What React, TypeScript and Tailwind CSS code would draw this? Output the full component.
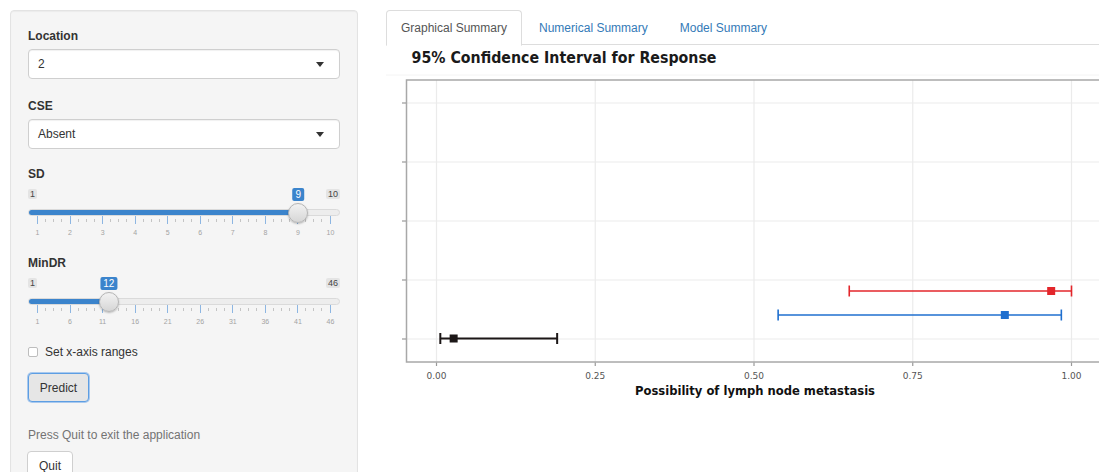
import React from "react";

type SliderProps = {
  min: number;
  max: number;
  value: number;
  ticks: number[];
};

// ion.rangeSlider-style single slider with a labelled grid underneath
function RangeSlider({ min, max, value, ticks }: SliderProps) {
  const gridLeft = 9;
  const gridWidth = 294;
  const handleX = gridLeft + ((value - min) / (max - min)) * gridWidth;
  const marks: boolean[] = [];
  ticks.forEach((_, i) => {
    marks.push(true);
    if (i < ticks.length - 1) marks.push(false, false, false);
  });

  return (
    <div className="relative mb-[17px] flex w-full flex-col">
      <div className="flex h-[16px] items-end justify-between text-[9px] leading-[10px] text-[#444]">
        <span className="h-[10px] rounded-[2px] bg-[#e4e4e4] px-[2px]">{min}</span>
        <span className="h-[10px] rounded-[2px] bg-[#e4e4e4] px-[2px]">{max}</span>
      </div>

      <div className="mt-[10px] h-[7px] overflow-hidden rounded-full border border-[#dadada] bg-[#ededed]">
        <div className="-m-px h-[7px] bg-[#3b84cc]" style={{ width: handleX }} />
      </div>

      <div className="flex h-[8px] items-start justify-between px-[9px]">
        {marks.map((major, i) =>
          major ? (
            <span key={i} className="h-[8px] w-px bg-[#8db6e2]" />
          ) : (
            <span key={i} className="mt-[3px] h-[3px] w-px bg-[#c4c4c4]" />
          )
        )}
      </div>

      <div className="mt-[5px] flex justify-between px-[9px] text-[7px] leading-[8px] text-[#a3a3a3]">
        {ticks.map((t) => (
          <span key={t} className="flex w-px justify-center">
            {t}
          </span>
        ))}
      </div>

      <span
        className="absolute top-[5px] h-[13px] -translate-x-1/2 rounded-[2px] bg-[#3b84cc] px-[3px] text-[10px] leading-[13px] text-white"
        style={{ left: handleX }}
      >
        {value}
      </span>
      <div
        className="absolute top-[20px] h-[20px] w-[20px] -translate-x-1/2 rounded-full border border-[#b5b5b5] bg-gradient-to-b from-[#f2f2f2] to-[#d6d6d6] shadow-[0_1px_2px_rgba(0,0,0,0.25)]"
        style={{ left: handleX }}
      />
    </div>
  );
}

function SelectBox({ value }: { value: string }) {
  return (
    <div className="flex h-[30px] items-center justify-between rounded-[4px] border border-[#cfcfcf] bg-white pl-[9px] pr-[15px] text-[12px] text-[#333] shadow-[inset_0_1px_1px_rgba(0,0,0,0.06)]">
      {value}
      <span className="h-0 w-0 border-x-[4px] border-t-[5px] border-x-transparent border-t-[#333]" />
    </div>
  );
}

function Label({ children }: { children: React.ReactNode }) {
  return <div className="h-[18px] text-[12px] font-bold leading-[18px] text-[#333]">{children}</div>;
}

const xTicks = [0, 0.25, 0.5, 0.75, 1];
const xScale = (v: number) => 436.5 + v * 635;
const yGrid = [104, 163, 222, 281, 340];

const intervals = [
  { y: 292, lo: 0.65, hi: 1.0, est: 0.968, color: "#e3262b", w: 1.6 },
  { y: 316, lo: 0.538, hi: 0.984, est: 0.895, color: "#1f6fcf", w: 1.6 },
  { y: 339.5, lo: 0.006, hi: 0.19, est: 0.027, color: "#1c1717", w: 2 },
];

function ConfidencePlot() {
  return (
    <svg
      width={713}
      height={426}
      viewBox="386 46 713 426"
      className="block"
      fontFamily="'DejaVu Sans', sans-serif"
    >
      <line x1={386} x2={1099} y1={76} y2={76} stroke="#f4f4f4" />
      <text
        x={411.5}
        y={64.3}
        fontSize={15}
        fontWeight={700}
        fill="#1a1a1a"
        textLength={305}
        lengthAdjust="spacingAndGlyphs"
      >
        95% Confidence Interval for Response
      </text>

      {xTicks.map((t) => (
        <line key={`gx${t}`} x1={xScale(t)} x2={xScale(t)} y1={81} y2={363} stroke="#ebebeb" strokeWidth={1.2} />
      ))}
      {yGrid.map((y) => (
        <line key={`gy${y}`} x1={406} x2={1099} y1={y} y2={y} stroke="#ebebeb" strokeWidth={1.2} />
      ))}
      <rect x={406.5} y={81} width={720} height={282} fill="none" stroke="#a8a8a8" strokeWidth={1.5} />

      {yGrid.map((y) => (
        <line key={`ty${y}`} x1={402} x2={406} y1={y} y2={y} stroke="#999" strokeWidth={1.2} />
      ))}
      {xTicks.map((t) => (
        <line key={`tx${t}`} x1={xScale(t)} x2={xScale(t)} y1={363.5} y2={367} stroke="#999" strokeWidth={1.2} />
      ))}

      {intervals.map((r) => (
        <g key={r.color} stroke={r.color} strokeWidth={r.w}>
          <line x1={xScale(r.lo)} x2={xScale(r.hi)} y1={r.y} y2={r.y} />
          <line x1={xScale(r.lo)} x2={xScale(r.lo)} y1={r.y - 5.5} y2={r.y + 5.5} />
          <line x1={xScale(r.hi)} x2={xScale(r.hi)} y1={r.y - 5.5} y2={r.y + 5.5} />
          <rect x={xScale(r.est) - 4} y={r.y - 4} width={8} height={8} fill={r.color} stroke="none" />
        </g>
      ))}

      {xTicks.map((t) => (
        <text key={`lx${t}`} x={xScale(t)} y={379.5} fontSize={9} fill="#555" textAnchor="middle">
          {t.toFixed(2)}
        </text>
      ))}
      <text
        x={635}
        y={395.5}
        fontSize={12}
        fontWeight={700}
        fill="#111"
        textLength={240}
        lengthAdjust="spacingAndGlyphs"
      >
        Possibility of lymph node metastasis
      </text>
    </svg>
  );
}

export default function App() {
  return (
    <div className="flex h-[472px] w-[1099px] overflow-hidden bg-white font-['Liberation_Sans',Arial,sans-serif] text-[#333]">
      <aside className="ml-[10px] mt-[10px] flex h-[520px] w-[348px] shrink-0 flex-col items-start rounded-[4px] border border-[#e3e3e3] bg-[#f5f5f5] px-[17px] pt-[16px] shadow-[inset_0_1px_1px_rgba(0,0,0,0.04)] [&>*]:self-stretch">
        <Label>Location</Label>
        <div className="mb-[18px] mt-[4px]">
          <SelectBox value="2" />
        </div>

        <Label>CSE</Label>
        <div className="mb-[16px] mt-[4px]">
          <SelectBox value="Absent" />
        </div>

        <Label>SD</Label>
        <RangeSlider min={1} max={10} value={9} ticks={[1, 2, 3, 4, 5, 6, 7, 8, 9, 10]} />

        <Label>MinDR</Label>
        <RangeSlider min={1} max={46} value={12} ticks={[1, 6, 11, 16, 21, 26, 31, 36, 41, 46]} />

        <label className="flex h-[18px] items-center gap-[7px] text-[12px] text-[#333]">
          <span className="h-[10px] w-[10px] rounded-[2px] border border-[#bdbdbd] bg-white" />
          Set x-axis ranges
        </label>

        <div className="mt-[12px]">
          <button className="h-[29px] w-[61px] rounded-[4px] border border-[#5d9ee3] bg-[#e6e6e6] text-[12px] text-[#333] shadow-[0_0_0_1px_#a9c9ee]">
            Predict
          </button>
        </div>

        <p className="mt-[24px] h-[18px] text-[12px] leading-[18px] text-[#737373]">
          Press Quit to exit the application
        </p>

        <div className="-ml-px mt-[7px]">
          <button className="h-[30px] w-[46px] rounded-[4px] border border-[#cfcfcf] bg-white text-[12px] text-[#333]">
            Quit
          </button>
        </div>
      </aside>

      <main className="ml-[28px] mt-[10px] flex min-w-0 flex-1 flex-col">
        <nav className="flex h-[35px] shrink-0 gap-[2px] border-b border-[#ddd] text-[12px]">
          <span className="-mb-px flex h-[36px] items-center rounded-t-[4px] border border-[#ddd] border-b-white bg-white px-[14px] text-[#555]">
            Graphical Summary
          </span>
          <span className="flex h-[35px] items-center border border-transparent px-[14px] text-[#337ab7]">
            Numerical Summary
          </span>
          <span className="flex h-[35px] items-center border border-transparent px-[14px] text-[#337ab7]">
            Model Summary
          </span>
        </nav>
        <ConfidencePlot />
      </main>
    </div>
  );
}
